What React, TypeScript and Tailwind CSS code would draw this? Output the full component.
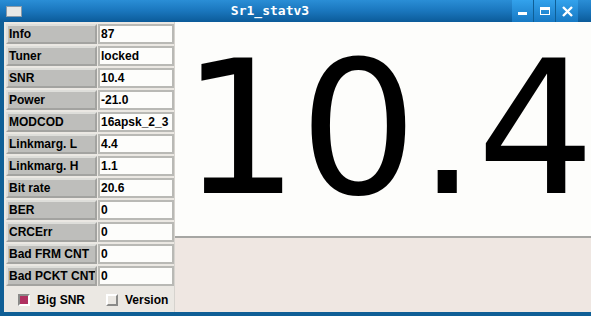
const rows: [string, string][] = [
  ["Info", "87"],
  ["Tuner", "locked"],
  ["SNR", "10.4"],
  ["Power", "-21.0"],
  ["MODCOD", "16apsk_2_3"],
  ["Linkmarg. L", "4.4"],
  ["Linkmarg. H", "1.1"],
  ["Bit rate", "20.6"],
  ["BER", "0"],
  ["CRCErr", "0"],
  ["Bad FRM CNT", "0"],
  ["Bad PCKT CNT", "0"],
];

export default function App() {
  return (
    <div className="w-[591px] h-[316px] flex flex-col bg-[#0f5f96] font-['Liberation_Sans',sans-serif] overflow-hidden">
      <TitleBar />
      <div className="flex-1 flex px-[4px] pb-[4px] min-h-0">
        <div className="w-[173px] bg-[#ebe8e3] border-r border-[#d6d3ce] flex flex-col pl-[2px] pt-[2px]">
          {rows.map(([label, value]) => (
            <div key={label} className="flex gap-[1px] h-[22px] pb-[2px]">
              <div className="w-[91px] bg-[#bebebb] border-2 border-t-[#dededa] border-l-[#dededa] border-b-[#a3a3a0] border-r-[#a3a3a0] flex items-center pl-[1px] text-[12px] font-bold text-black whitespace-nowrap overflow-hidden">
                {label}
              </div>
              <div className="w-[76px] bg-[#fdfdfb] border-2 border-[#b9b9b5] flex items-center pl-[1px] text-[12px] font-bold text-black whitespace-nowrap overflow-hidden">
                {value}
              </div>
            </div>
          ))}
          <div className="flex items-center h-[20px] mt-[2px] text-[12px] font-bold text-black">
            <div className="flex items-center ml-[12px] gap-[7px]">
              <span className="w-[12px] h-[12px] bg-[#b03060] border-2 border-t-[#8a8a88] border-l-[#8a8a88] border-b-white border-r-white" />
              Big SNR
            </div>
            <div className="flex items-center ml-[21px] gap-[7px]">
              <span className="w-[12px] h-[12px] bg-[#ebe8e3] border-2 border-t-white border-l-white border-b-[#8a8a88] border-r-[#8a8a88]" />
              Version
            </div>
          </div>
        </div>
        <div className="flex-1 flex flex-col bg-[#efe7e2]">
          <div className="h-[216px] bg-[#fdfdfb] border-b-2 border-r-2 border-[#a6a6a3] flex items-center justify-center pl-[6px]">
            <span className="font-['DejaVu_Sans',sans-serif] text-[186px] leading-none text-black">10.4</span>
          </div>
        </div>
      </div>
    </div>
  );
}

function TitleBar() {
  return (
    <div className="h-[22px] flex items-stretch bg-gradient-to-b from-[#2a8ed6] via-[#1a76bd] to-[#0b5b99]">
      <div className="w-[28px] flex items-center justify-center">
        <span className="w-[16px] h-[11px] bg-[#e8e8e6] border border-[#8a9aa8]" />
      </div>
      <div className="flex-1 flex items-center justify-center font-['DejaVu_Sans_Mono',monospace] font-bold text-[13px] text-white">
        Sr1_statv3
      </div>
      <div className="flex">
        <div className="w-[22px] flex items-end justify-center pb-[7px] bg-gradient-to-b from-[#33a2ec] to-[#1679c4] border-r border-[#0f5f96]">
          <span className="w-[9px] h-[3px] bg-white" />
        </div>
        <div className="w-[22px] flex items-center justify-center bg-gradient-to-b from-[#33a2ec] to-[#1679c4] border-r border-[#0f5f96]">
          <span className="w-[10px] h-[8px] border border-t-[3px] border-white" />
        </div>
        <div className="w-[22px] flex items-center justify-center bg-gradient-to-b from-[#33a2ec] to-[#1679c4]">
          <svg width="11" height="11" viewBox="0 0 11 11">
            <path d="M1 1 L10 10 M10 1 L1 10" stroke="white" strokeWidth="2.4" />
          </svg>
        </div>
      </div>
      <div className="w-[13px]" />
    </div>
  );
}
